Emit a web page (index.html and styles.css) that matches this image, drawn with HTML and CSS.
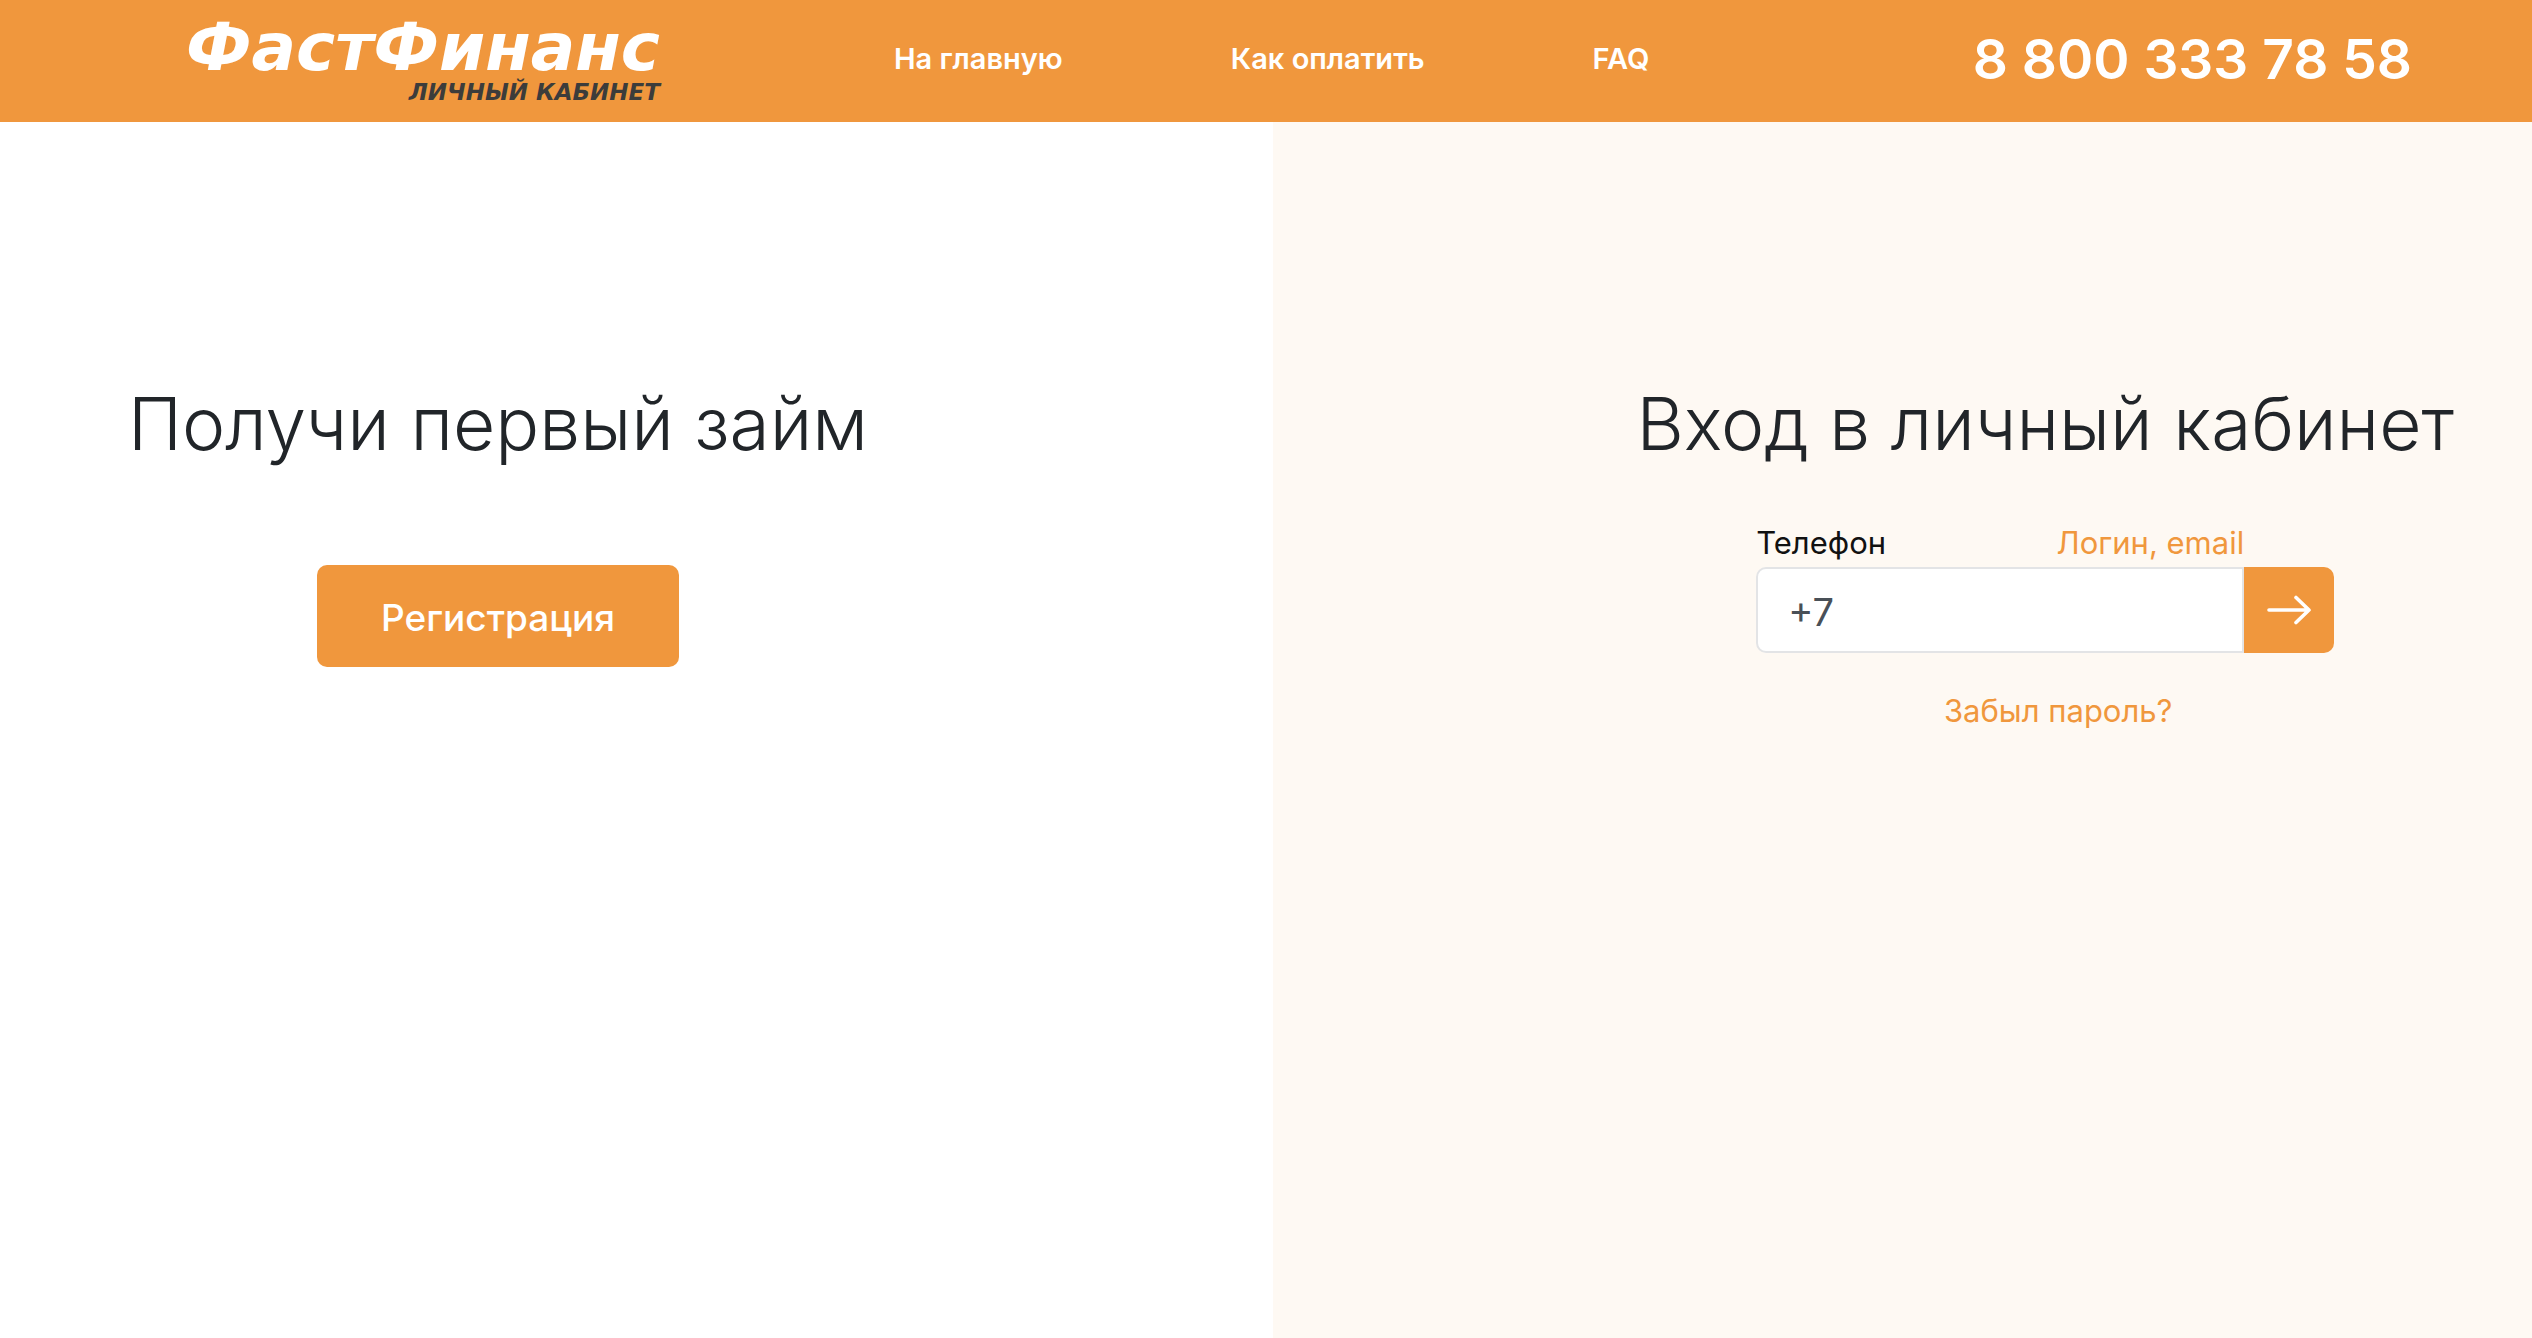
FILE: index.html
```html
<!DOCTYPE html>
<html lang="ru">
<head>
<meta charset="utf-8">
<meta name="viewport" content="width=device-width, initial-scale=1">
<title>ФастФинанс — личный кабинет</title>
<link rel="stylesheet" href="styles.css">
</head>
<body>
<header class="header">
  <a class="logo" href="#">
    <span class="logo-name">ФастФинанс</span>
    <span class="logo-sub">ЛИЧНЫЙ КАБИНЕТ</span>
  </a>
  <nav class="nav">
    <a href="#">На главную</a>
    <a href="#">Как оплатить</a>
    <a href="#">FAQ</a>
  </nav>
  <a class="phone" href="tel:88003337858">8 800 333 78 58</a>
</header>
<main class="main">
  <section class="panel panel-register">
    <div class="content">
      <h1 class="title">Получи первый займ</h1>
      <button class="register" type="button">Регистрация</button>
    </div>
  </section>
  <section class="panel panel-login">
    <div class="content">
      <h2 class="title">Вход в личный кабинет</h2>
      <form class="login">
        <div class="login-labels">
          <label for="phone">Телефон</label>
          <a href="#">Логин, email</a>
        </div>
        <div class="login-row">
          <input class="login-input" id="phone" type="tel" value="+7">
          <button class="login-submit" type="submit" aria-label="Войти">
            <svg width="46" height="30" viewBox="0 0 46 30" fill="none" stroke="currentColor" stroke-width="3.6" stroke-linecap="round" stroke-linejoin="round"><path d="M3 15H43M30 2.500L43 15L30 27.500"/></svg>
          </button>
        </div>
        <a class="forgot" href="#">Забыл пароль?</a>
      </form>
    </div>
  </section>
</main>
</body>
</html>
```
FILE: styles.css
```css
* { box-sizing: border-box; }

body {
  margin: 0;
  min-height: 100vh;
  display: flex;
  flex-direction: column;
  font-family: Inter, "Liberation Sans", sans-serif;
  font-size: 31px;
  color: #212529;
  background: #fff;
}

a { color: #f0973d; text-decoration: none; }
button, input { font: inherit; margin: 0; }

.header {
  display: flex;
  align-items: center;
  height: 122px;
  padding: 0 120px 4px 180px;
  background: #f0973d;
}

.logo {
  width: 480px;
  display: flex;
  flex-direction: column;
  align-items: flex-end;
  font-family: "DejaVu Sans", sans-serif;
  font-weight: 700;
  font-style: italic;
  white-space: nowrap;
}
.logo-name { font-size: 66px; line-height: 66px; color: #fff; }
.logo-sub { font-size: 23px; line-height: 22px; color: #3c3c3b; }

.nav {
  display: flex;
  gap: 168px;
  margin-left: 234px;
  font-size: 29px;
  font-weight: 600;
  line-height: 48px;
  white-space: nowrap;
}
.nav a { color: #fff; }

.phone {
  margin-left: auto;
  font-size: 55px;
  font-weight: 600;
  line-height: 64px;
  color: #fff;
  white-space: nowrap;
}

.main {
  flex: 1;
  display: grid;
  grid-template-columns: 1273fr 1259fr;
}

.panel { display: flex; padding: 254px 78px 64px 128px; }
.panel-login { justify-content: flex-end; background: #fef9f3; }

.content { display: flex; flex-direction: column; align-items: center; }

.title {
  margin: 0;
  font-size: 73px;
  font-weight: 300;
  line-height: 96px;
  white-space: nowrap;
}

.register {
  margin-top: 93px;
  padding: 2px 64px 0;
  height: 102px;
  border: 0;
  border-radius: 10px;
  background: #f0973d;
  color: #fff;
  font-size: 37px;
  font-weight: 500;
}

.login {
  width: 578px;
  margin-top: 47px;
  display: flex;
  flex-direction: column;
}
.login-labels {
  display: flex;
  justify-content: space-between;
  margin-right: 90px;
  line-height: 48px;
  color: #111;
}
.login-row { display: flex; height: 86px; }
.login-input {
  flex: 1;
  min-width: 0;
  padding: 4px 30px 0;
  border: 2px solid #e3e4e6;
  border-radius: 10px 0 0 10px;
  background: #fff;
  color: #495057;
  font-size: 38px;
}
.login-submit {
  width: 90px;
  padding: 0;
  border: 0;
  border-radius: 0 10px 10px 0;
  background: #f0973d;
  color: #fff;
  display: flex;
  align-items: center;
  justify-content: center;
}
.forgot { margin-top: 34px; padding-left: 26px; line-height: 48px; text-align: center; }
```
